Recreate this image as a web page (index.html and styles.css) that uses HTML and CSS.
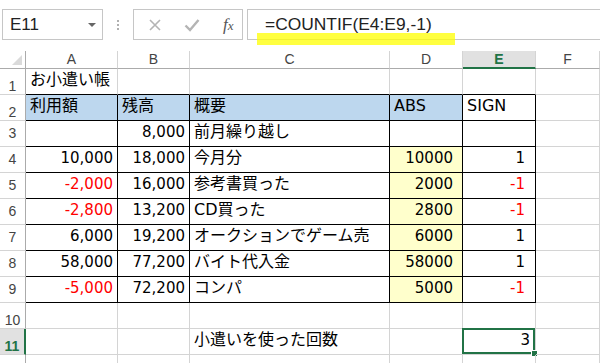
FILE: index.html
```html
<!DOCTYPE html>
<html lang="ja">
<head>
<meta charset="utf-8">
<title>お小遣い帳</title>
<link rel="stylesheet" href="styles.css">
</head>
<body>
<div class="toolbar">
  <div class="namebox"><span class="nm">E11</span><span class="dd"></span></div>
  <div class="grip"><i></i><i></i><i></i></div>
  <div class="iconbox">
    <svg class="ic" width="14" height="14" viewBox="0 0 14 14"><path d="M2 2 L12 12 M12 2 L2 12" stroke="#b4b4b4" stroke-width="1.6" fill="none"/></svg>
    <svg class="ic" width="16" height="14" viewBox="0 0 16 14"><path d="M1.5 7.5 L6 12 L14.5 2" stroke="#b4b4b4" stroke-width="2.4" fill="none"/></svg>
    <span class="fx"><i>f</i><i class="x">x</i></span>
  </div>
  <div class="formula">=COUNTIF(E4:E9,-1)</div>
  <div class="marker"></div>
</div>
<div class="sheet">
  <div class="h corner"><svg width="10" height="10" viewBox="0 0 10 10"><path d="M10 0 L10 10 L0 10 Z" fill="#dadada"/></svg></div>
  <div class="h">A</div><div class="h">B</div><div class="h">C</div><div class="h">D</div><div class="h sel">E</div><div class="h">F</div>

  <div class="r b">1</div>
  <div class="c t bb">お小遣い帳</div><div class="c bb"></div><div class="c bb"></div><div class="c bb"></div><div class="c bb"></div><div class="c"></div>

  <div class="r b">2</div>
  <div class="c t k blue">利用額</div><div class="c t k blue">残高</div><div class="c t k blue">概要</div><div class="c t k blue">ABS</div><div class="c t k">SIGN</div><div class="c"></div>

  <div class="r">3</div>
  <div class="c k"></div><div class="c n k">8,000</div><div class="c t k">前月繰り越し</div><div class="c k"></div><div class="c k"></div><div class="c"></div>

  <div class="r">4</div>
  <div class="c n k">10,000</div><div class="c n k">18,000</div><div class="c t k">今月分</div><div class="c n k y">10000</div><div class="c n k e">1</div><div class="c"></div>

  <div class="r">5</div>
  <div class="c n k red">-2,000</div><div class="c n k">16,000</div><div class="c t k">参考書買った</div><div class="c n k y">2000</div><div class="c n k e red">-1</div><div class="c"></div>

  <div class="r">6</div>
  <div class="c n k red">-2,800</div><div class="c n k">13,200</div><div class="c t k">CD買った</div><div class="c n k y">2800</div><div class="c n k e red">-1</div><div class="c"></div>

  <div class="r">7</div>
  <div class="c n k">6,000</div><div class="c n k">19,200</div><div class="c t k">オークションでゲーム売</div><div class="c n k y">6000</div><div class="c n k e">1</div><div class="c"></div>

  <div class="r">8</div>
  <div class="c n k">58,000</div><div class="c n k">77,200</div><div class="c t k">バイト代入金</div><div class="c n k y">58000</div><div class="c n k e">1</div><div class="c"></div>

  <div class="r">9</div>
  <div class="c n k red">-5,000</div><div class="c n k">72,200</div><div class="c t k">コンパ</div><div class="c n k y">5000</div><div class="c n k e red">-1</div><div class="c"></div>

  <div class="r b">10</div>
  <div class="c"></div><div class="c"></div><div class="c"></div><div class="c"></div><div class="c"></div><div class="c"></div>

  <div class="r b rsel">11</div>
  <div class="c"></div><div class="c"></div><div class="c t">小遣いを使った回数</div><div class="c"></div><div class="c n active">3</div><div class="c"></div>

  <div class="r"></div>
  <div class="c"></div><div class="c"></div><div class="c"></div><div class="c"></div><div class="c"></div><div class="c"></div>
</div>
</body>
</html>
```
FILE: styles.css
```css
html, body {
  margin: 0;
  padding: 0;
  background: #ffffff;
  overflow: hidden;
}

.toolbar {
  position: relative;
  height: 51px;
  box-sizing: border-box;
  padding: 9px 0 0 2px;
  display: flex;
  align-items: flex-start;
}

.namebox {
  width: 101px;
  height: 31px;
  box-sizing: border-box;
  border: 1px solid #c6c6c6;
  display: flex;
  align-items: center;
  justify-content: space-between;
  padding: 0 6px 0 7px;
  font-family: "Liberation Sans", Arial, sans-serif;
  font-size: 17px;
  color: #222;
}

.dd {
  width: 0;
  height: 0;
  border-left: 4px solid transparent;
  border-right: 4px solid transparent;
  border-top: 4px solid #666;
  margin-top: 1px;
}

.grip {
  width: 30px;
  height: 31px;
  display: flex;
  flex-direction: column;
  align-items: center;
  justify-content: center;
  gap: 2px;
}

.grip i {
  display: block;
  width: 2px;
  height: 2px;
  background: #b0b0b0;
}

.iconbox {
  width: 110px;
  height: 31px;
  box-sizing: border-box;
  border: 1px solid #c6c6c6;
  display: flex;
  align-items: center;
  padding-left: 14px;
  gap: 22px;
}

.ic {
  display: block;
}

.fx {
  font-family: "Liberation Serif", "Times New Roman", serif;
  font-size: 17px;
  color: #555;
  margin-left: 1px;
  line-height: 1;
}

.fx .x {
  font-size: 13px;
}

.formula {
  flex: 1;
  height: 31px;
  box-sizing: border-box;
  margin-left: 4px;
  border-top: 1px solid #c6c6c6;
  border-bottom: 1px solid #c6c6c6;
  border-left: 1px solid #c6c6c6;
  padding-left: 17px;
  font-family: "Liberation Sans", Arial, sans-serif;
  font-size: 17.4px;
  line-height: 29px;
  color: #222;
}

.marker {
  position: absolute;
  left: 257px;
  top: 33px;
  width: 198px;
  height: 12px;
  background: rgba(255, 255, 0, 0.75);
}

.sheet {
  display: grid;
  grid-template-columns: 26px 92px 72px 200px 73px 73px 1fr;
  grid-template-rows: 18px repeat(12, 26px);
}

.h {
  box-sizing: border-box;
  border-right: 1px solid #d4d4d4;
  border-bottom: 1px solid #ababab;
  font-family: "Liberation Sans", Arial, sans-serif;
  font-size: 14px;
  color: #444;
  text-align: center;
  line-height: 17px;
}

.h.corner {
  border-right: 1px solid #ababab;
  display: flex;
  align-items: flex-end;
  justify-content: flex-end;
  padding: 0 3px 3px 0;
}

.h.corner svg {
  display: block;
}

.h.sel {
  background: #e1e1e1;
  color: #217346;
  border-bottom: 2px solid #217346;
  font-weight: bold;
  line-height: 16px;
}

.r {
  box-sizing: border-box;
  border-right: 1px solid #ababab;
  border-bottom: 1px solid #d4d4d4;
  font-family: "Liberation Sans", Arial, sans-serif;
  font-size: 14px;
  color: #444;
  text-align: center;
  line-height: 25px;
}

.r.b {
  line-height: 16px;
  padding-top: 9px;
}

.r.rsel {
  background: #e1e1e1;
  color: #217346;
  border-right: 2px solid #217346;
  font-weight: bold;
}

.c {
  position: relative;
  box-sizing: border-box;
  border-right: 1px solid #d4d4d4;
  border-bottom: 1px solid #d4d4d4;
  padding: 0 4px;
  font-family: "DejaVu Sans", "Noto Sans CJK JP", sans-serif;
  font-size: 16px;
  line-height: 22px;
  color: #000;
  white-space: nowrap;
}

.c.n {
  font-size: 15px;
  text-align: right;
}

.c.bb {
  border-bottom-color: #000;
}

.c.k {
  border-right-color: #000;
  border-bottom-color: #000;
}

.c.blue {
  background: #bdd7ee;
}

.c.y {
  background: #ffffcc;
  padding-right: 9px;
}

.c.e {
  padding-right: 10px;
}

.c.red {
  color: #ff0000;
}

.c.active {
  padding-right: 5px;
}

.c.active::before {
  content: "";
  position: absolute;
  left: -1px;
  top: -1px;
  right: 0;
  bottom: 0;
  border: 2px solid #217346;
}

.c.active::after {
  content: "";
  position: absolute;
  right: -3px;
  bottom: -3px;
  width: 5px;
  height: 5px;
  background: #217346;
  border: 1px solid #ffffff;
}
```
